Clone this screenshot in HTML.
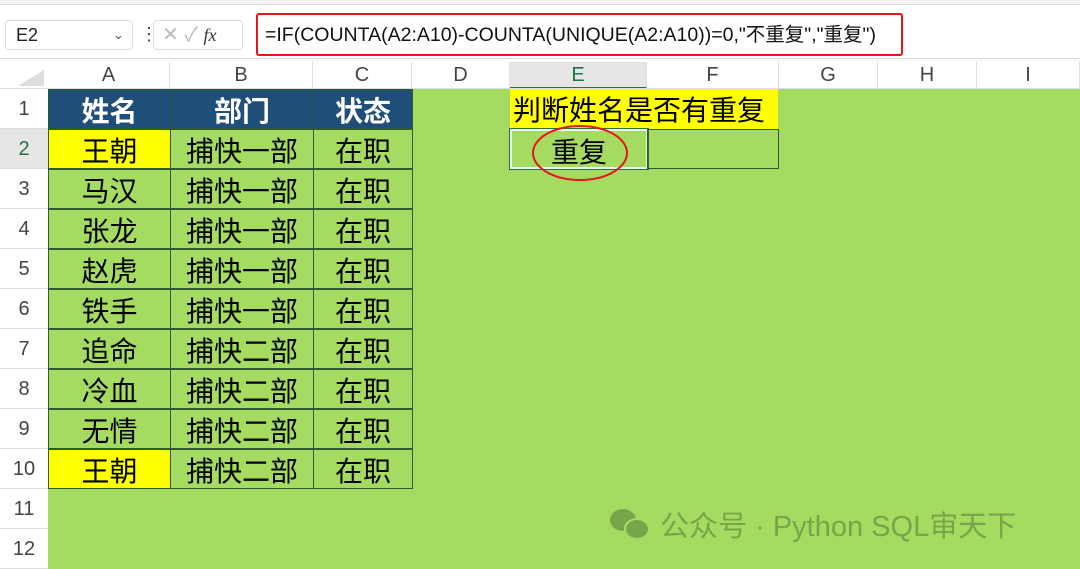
<!DOCTYPE html><html><head><meta charset="utf-8"><style>
*{margin:0;padding:0;box-sizing:border-box}
body{width:1080px;height:569px;overflow:hidden;background:#fff;position:relative;font-family:"Liberation Sans","Noto Sans CJK SC",sans-serif}
.a{position:absolute}
.ch{position:absolute;top:62px;height:27px;font-size:20px;color:#444;text-align:center;line-height:27px;border-right:1px solid #ddd}
.rh{position:absolute;left:0;width:48px;height:40px;font-size:20px;color:#444;text-align:center;line-height:40px;border-bottom:1px solid #ddd}
.c{position:absolute;height:40px;font-size:28px;line-height:40px;text-align:center;color:#000;border:1px solid #2f5a2f;font-family:"Noto Sans CJK SC",sans-serif}
.h{background:#1f4e79;color:#fff;font-weight:bold}
.y{background:#ffff00}
</style></head><body>
<div class="a" style="left:0;top:0;width:1080px;height:5px;background:#f3f3f3;border-bottom:1px solid #ddd"></div>
<div class="a" style="left:5px;top:20px;width:128px;height:30px;border:1px solid #ddd;border-radius:4px;font-size:18px;line-height:28px;padding-left:10px;color:#222">E2<span style="position:absolute;right:8px;font-size:13px;color:#555">&#8964;</span></div>
<div class="a" style="left:140px;top:25px;font-size:18px;color:#444;line-height:18px">&#8942;</div>
<div class="a" style="left:153px;top:20px;width:90px;height:30px;border:1px solid #ddd;border-radius:4px;color:#bbb;font-size:20px;line-height:28px;padding-left:8px">✕ ✓ <i style="color:#333;font-family:'Liberation Serif',serif;font-size:18px">fx</i></div>
<div class="a" style="left:256px;top:13px;width:647px;height:43px;border:2px solid #e3161b;border-radius:3px;font-size:19.5px;line-height:40px;padding-left:7px;color:#111;white-space:nowrap;font-family:'Liberation Sans','Noto Sans CJK SC',sans-serif">=IF(COUNTA(A2:A10)-COUNTA(UNIQUE(A2:A10))=0,"不重复","重复")</div>
<div class="a" style="left:0;top:58px;width:1080px;height:1px;background:#ddd"></div>
<div class="a" style="left:48px;top:89px;width:1032px;height:480px;background:#a5db61"></div>
<div class="a" style="left:18px;top:70px;width:0;height:0;border-left:26px solid transparent;border-bottom:16px solid #ddd"></div>
<div class="ch" style="left:48px;width:122px">A</div>
<div class="ch" style="left:170px;width:143px">B</div>
<div class="ch" style="left:313px;width:99px">C</div>
<div class="ch" style="left:412px;width:98px">D</div>
<div class="ch" style="left:510px;width:137px;background:#e6e6e6;border-bottom:2px solid #217346;color:#217346">E</div>
<div class="ch" style="left:647px;width:132px">F</div>
<div class="ch" style="left:779px;width:99px">G</div>
<div class="ch" style="left:878px;width:99px">H</div>
<div class="ch" style="left:977px;width:103px">I</div>
<div class="a" style="left:0;top:88px;width:1080px;height:1px;background:#ddd"></div>
<div class="rh" style="top:89px">1</div>
<div class="rh" style="top:129px;background:#e6e6e6;color:#217346">2</div>
<div class="rh" style="top:169px">3</div>
<div class="rh" style="top:209px">4</div>
<div class="rh" style="top:249px">5</div>
<div class="rh" style="top:289px">6</div>
<div class="rh" style="top:329px">7</div>
<div class="rh" style="top:369px">8</div>
<div class="rh" style="top:409px">9</div>
<div class="rh" style="top:449px">10</div>
<div class="rh" style="top:489px">11</div>
<div class="rh" style="top:529px">12</div>

<div class="c h" style="left:48px;top:89px;width:123px">姓名</div>
<div class="c h" style="left:170px;top:89px;width:144px">部门</div>
<div class="c h" style="left:313px;top:89px;width:100px">状态</div>

<div class="c y" style="left:48px;top:129px;width:123px">王朝</div><div class="c" style="left:170px;top:129px;width:144px">捕快一部</div><div class="c" style="left:313px;top:129px;width:100px">在职</div>
<div class="c" style="left:48px;top:169px;width:123px">马汉</div><div class="c" style="left:170px;top:169px;width:144px">捕快一部</div><div class="c" style="left:313px;top:169px;width:100px">在职</div>
<div class="c" style="left:48px;top:209px;width:123px">张龙</div><div class="c" style="left:170px;top:209px;width:144px">捕快一部</div><div class="c" style="left:313px;top:209px;width:100px">在职</div>
<div class="c" style="left:48px;top:249px;width:123px">赵虎</div><div class="c" style="left:170px;top:249px;width:144px">捕快一部</div><div class="c" style="left:313px;top:249px;width:100px">在职</div>
<div class="c" style="left:48px;top:289px;width:123px">铁手</div><div class="c" style="left:170px;top:289px;width:144px">捕快一部</div><div class="c" style="left:313px;top:289px;width:100px">在职</div>
<div class="c" style="left:48px;top:329px;width:123px">追命</div><div class="c" style="left:170px;top:329px;width:144px">捕快二部</div><div class="c" style="left:313px;top:329px;width:100px">在职</div>
<div class="c" style="left:48px;top:369px;width:123px">冷血</div><div class="c" style="left:170px;top:369px;width:144px">捕快二部</div><div class="c" style="left:313px;top:369px;width:100px">在职</div>
<div class="c" style="left:48px;top:409px;width:123px">无情</div><div class="c" style="left:170px;top:409px;width:144px">捕快二部</div><div class="c" style="left:313px;top:409px;width:100px">在职</div>
<div class="c y" style="left:48px;top:449px;width:123px">王朝</div><div class="c" style="left:170px;top:449px;width:144px">捕快二部</div><div class="c" style="left:313px;top:449px;width:100px">在职</div>

<div class="a y" style="left:510px;top:89px;width:268px;height:40px;font-size:28px;line-height:40px;padding-left:3px;white-space:nowrap;font-family:'Noto Sans CJK SC',sans-serif">判断姓名是否有重复</div>
<div class="c" style="left:510px;top:129px;width:138px;border:2px solid #e8f4e8;outline:1px solid #217346">重复</div>
<div class="c" style="left:647px;top:129px;width:132px"></div>
<svg class="a" style="left:510px;top:122px" width="140" height="62"><ellipse cx="70" cy="31" rx="47" ry="27" fill="none" stroke="#e3161b" stroke-width="2"/></svg>

<div class="a" style="left:608px;top:503px;font-size:29px;color:#77a64a;font-family:'Liberation Sans','Noto Sans CJK SC',sans-serif;white-space:nowrap">
<svg width="44" height="34" style="vertical-align:-5px"><ellipse cx="15" cy="13" rx="13" ry="11" fill="#77a64a"/><ellipse cx="29" cy="22" rx="12" ry="10" fill="#77a64a" stroke="#a5db61" stroke-width="2"/></svg> 公众号 · Python SQL审天下</div>
</body></html>
